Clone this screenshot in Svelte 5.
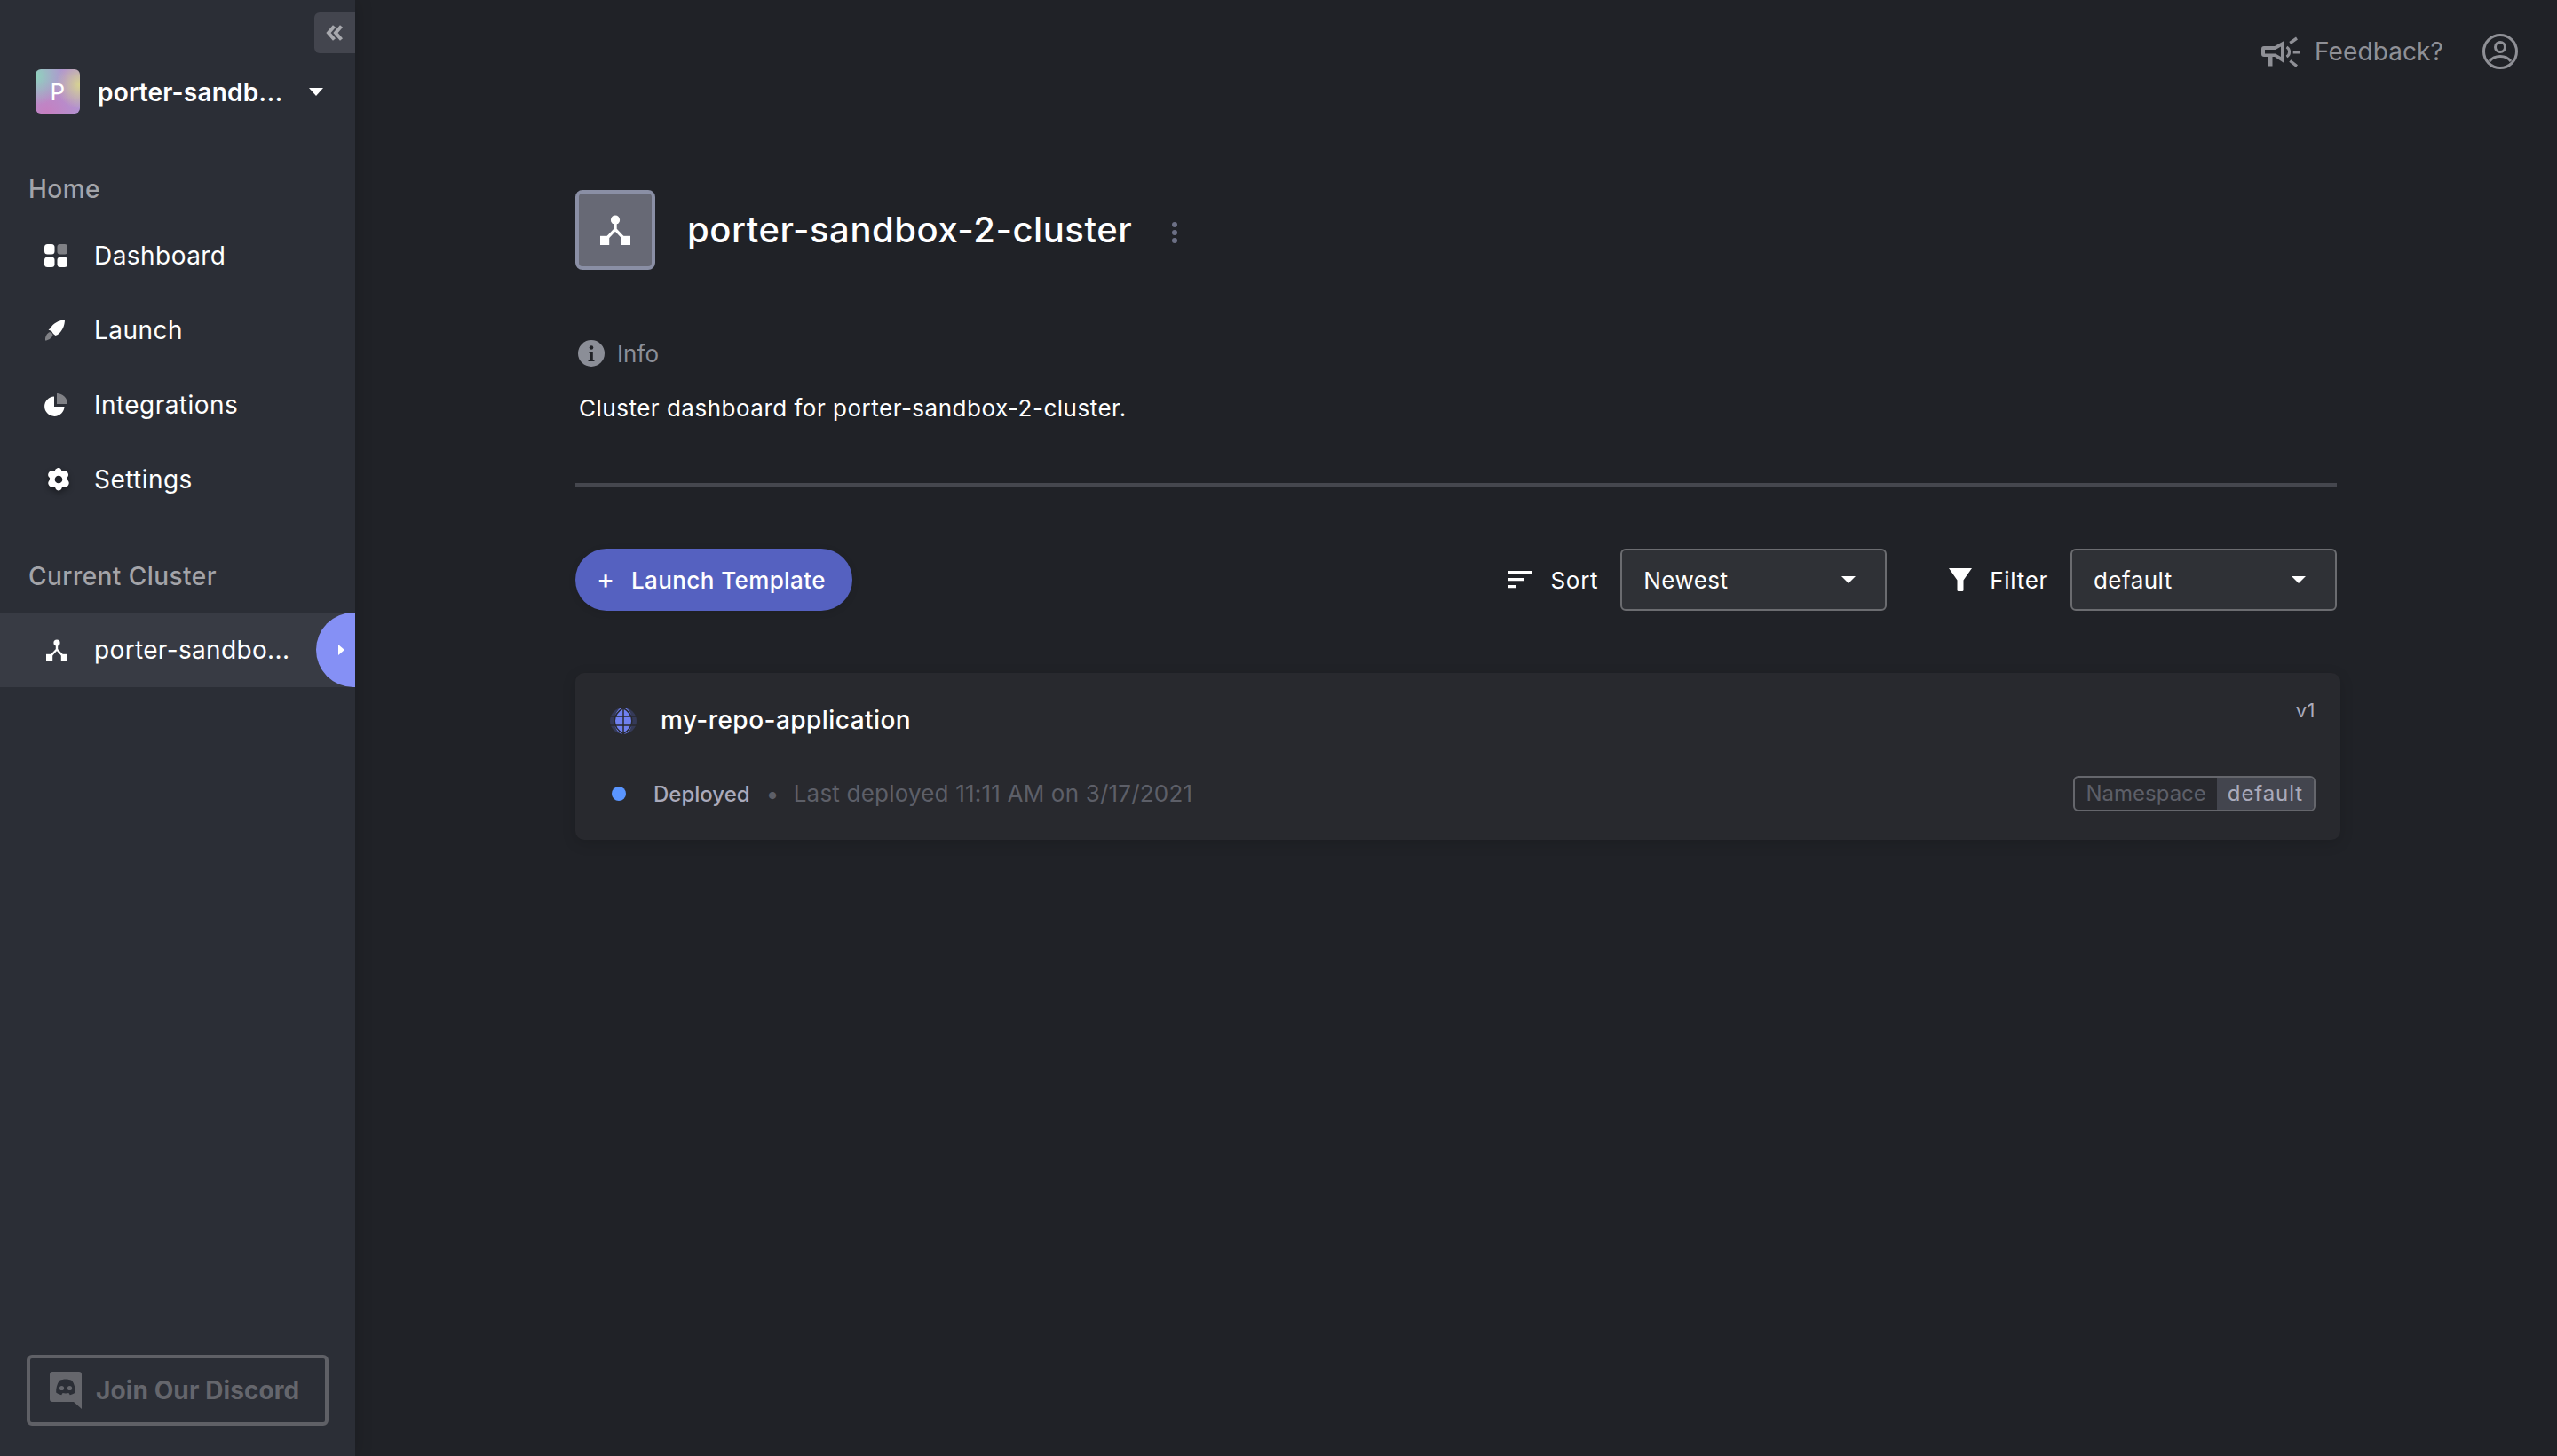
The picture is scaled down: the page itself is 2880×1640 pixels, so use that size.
<script>
	const navItems = [
		{ label: 'Dashboard', icon: 'dashboard' },
		{ label: 'Launch', icon: 'launch' },
		{ label: 'Integrations', icon: 'integrations' },
		{ label: 'Settings', icon: 'settings' }
	];
</script>

{#snippet clusterIcon()}
	<svg viewBox="0 0 24 24" class="cluster-svg">
		<circle cx="12" cy="4" r="3.6" fill="#fff" />
		<path d="M12 5v7.5M12 11.5L5 19M12 11.5L19 19" stroke="#fff" stroke-width="2.4" fill="none" />
		<rect x="0" y="16.8" width="7.2" height="7.2" fill="#fff" />
		<rect x="16.8" y="16.8" width="7.2" height="7.2" fill="#fff" />
	</svg>
{/snippet}

<div class="page">
	<aside class="sidebar">
		<button class="collapse" aria-label="Collapse sidebar">
			<svg viewBox="0 0 20 18" width="20" height="18">
				<path d="M9.500 1.500L3 9l6.500 7.500M17.500 1.500L11 9l6.500 7.500" stroke="#a8a9ae" stroke-width="4" fill="none" />
			</svg>
		</button>

		<div class="project">
			<div class="avatar">P</div>
			<span class="project-name">porter-sandb...</span>
			<span class="caret white"></span>
		</div>

		<div class="section-label home">Home</div>
		{#each navItems as item}
			<div class="nav-row">
				<span class="nav-icon">
					{#if item.icon === 'dashboard'}
						<svg viewBox="0 0 26 26" width="26" height="26">
							<rect x="0" y="0" width="11.5" height="11.5" rx="3.5" fill="#fff" />
							<rect x="14.5" y="0" width="11.5" height="11.5" rx="3" fill="#808186" />
							<rect x="0" y="14.5" width="11.5" height="11.5" rx="3.5" fill="#fff" />
							<rect x="14.5" y="14.5" width="11.5" height="11.5" rx="3.5" fill="#fff" />
						</svg>
					{:else if item.icon === 'launch'}
						<svg viewBox="0 0 24 24" width="24" height="24">
							<path d="M23 0C16 1 10 4 6.500 10L4.500 11.500 8 13l2 3 2.500 2L15 17C20 13 23 7 23 0z" fill="#fff" />
							<path d="M5 14.500c2-1 4.500 1 4.500 3.500C8 21 4 23.500 1 23.500 .5 20 2 16.500 5 14.500z" fill="#808186" />
						</svg>
					{:else if item.icon === 'integrations'}
						<svg viewBox="0 0 26 26" width="26" height="26">
							<path d="M11 3.500A11.200 11.200 0 1 0 22.500 15H11z" fill="#fff" />
							<path d="M14 0A12 12 0 0 1 26 12H14z" fill="#808186" />
						</svg>
					{:else}
						<svg viewBox="0 0 24 24" width="28" height="28" class="gear">
							<path fill="#fff" fill-rule="evenodd" d="M12 .8c1.100 0 2 .5 2.400 1.500l.5 1.300 1.400-.2c2.200-.3 3.800.7 4.600 2.100.8 1.400.8 2.800-.3 4.100l-.8 1 .8 1.800.7 .9c1 1.300 1 2.800.2 4.100-.8 1.400-2.300 2.400-4.500 2.100l-1.500-.2-.5 1.200c-.5 1.200-1.500 2.200-3 2.200s-2.500-1-3-2.200l-.5-1.200-1.500.2c-2.200.3-3.700-.7-4.500-2.100-.8-1.300-.8-2.800.2-4.100l.7-.9.100-1.800-.8-1c-1.100-1.300-1.100-2.700-.3-4.100.8-1.400 2.400-2.400 4.600-2.100l1.400.2.500-1.300C10 1.300 10.900.8 12 .8zM12 8.300a3.700 3.700 0 1 0 0 7.400 3.700 3.700 0 0 0 0-7.400z" />
						</svg>
					{/if}
				</span>
				<span class="nav-text">{item.label}</span>
			</div>
		{/each}

		<div class="section-label current">Current Cluster</div>
		<div class="nav-row selected">
			<span class="nav-icon">{@render clusterIcon()}</span>
			<span class="nav-text">porter-sandbo...</span>
			<span class="drawer-tab"><span class="tab-arrow"></span></span>
		</div>

		<div class="discord">
			<svg viewBox="0 0 36 42" width="36" height="42">
				<path fill="#65666c" d="M3 0h30a3 3 0 0 1 3 3v39l-9-8H3a3 3 0 0 1-3-3V3a3 3 0 0 1 3-3z" />
				<path fill="#2b2e36" d="M11 10c2.200-1 4.500-1.500 7-1.500s4.800.5 7 1.500c2.800 4 4 8.500 3.800 13.500-2 1.500-4 2.300-6 2.700l-1.400-2.200c-2.300.6-4.500.6-6.800 0l-1.400 2.200c-2-.4-4-1.200-6-2.700C7 18.500 8.200 14 11 10z" />
				<circle cx="13.500" cy="18.500" r="2.600" fill="#65666c" />
				<circle cx="22.500" cy="18.500" r="2.600" fill="#65666c" />
			</svg>
			<span>Join Our Discord</span>
		</div>
	</aside>

	<main class="main">
		<header class="topbar">
			<div class="feedback">
				<svg viewBox="0 0 44 34" width="44" height="34">
					<path fill="#8f9096" fill-rule="evenodd" d="M25.500 5v25L15 23H3a3 3 0 0 1-3-3v-6a3 3 0 0 1 3-3h12zM22 11.500L16 15H4v4.500h12l6 3.500z" />
					<path d="M7.500 23h5v10.500h-5z" fill="#8f9096" />
					<path d="M28.500 12a6.500 6.500 0 0 1 0 11" stroke="#8f9096" stroke-width="3" fill="none" />
					<path d="M32.300 7.500l7.700-5.500M35.700 17.700H44M32.300 27.500l7.700 6" stroke="#8f9096" stroke-width="3.400" fill="none" />
				</svg>
				<span>Feedback?</span>
			</div>
			<svg class="user" viewBox="0 0 40 40" width="40" height="40">
				<circle cx="20" cy="20" r="18.500" stroke="#8f9096" stroke-width="3" fill="none" />
				<circle cx="20" cy="15" r="5.500" stroke="#8f9096" stroke-width="3" fill="none" />
				<path d="M8 31c3-4 7.500-5.500 12-5.500S29 27 32 31" stroke="#8f9096" stroke-width="3" fill="none" />
			</svg>
		</header>

		<section class="content">
			<div class="title-row">
				<div class="title-tile">{@render clusterIcon()}</div>
				<h1>porter-sandbox-2-cluster</h1>
				<div class="kebab"><i></i><i></i><i></i></div>
			</div>

			<div class="info-row">
				<svg viewBox="0 0 30 30" width="30" height="30">
					<circle cx="15" cy="15" r="15" fill="#8b8e97" />
					<circle cx="15" cy="8.500" r="2.300" fill="#202227" />
					<path d="M12.500 13h4.300v9H18.500v2h-7v-2h2v-7h-1z" fill="#202227" />
				</svg>
				<span>Info</span>
			</div>
			<p class="description">Cluster dashboard for porter-sandbox-2-cluster.</p>
			<div class="divider"></div>

			<div class="controls">
				<button class="launch-btn"><span class="plus">+</span>Launch Template</button>
				<div class="selectors">
					<svg class="sort-icon" viewBox="0 0 28 20" width="28" height="20">
						<path d="M0 0h28v3.200H0zM0 8h19v3.200H0zM0 16h9v3.200H0z" fill="#fff" />
					</svg>
					<span class="sel-label">Sort</span>
					<div class="select"><span>Newest</span><span class="caret small"></span></div>
					<svg class="filter-icon" viewBox="0 0 26 26" width="26" height="26">
						<path d="M0 0h26L16.500 13.500V25a1.500 1.500 0 0 1-1.500 1h-4a1.500 1.500 0 0 1-1.500-1V13.500z" fill="#fff" />
					</svg>
					<span class="sel-label">Filter</span>
					<div class="select"><span>default</span><span class="caret small"></span></div>
				</div>
			</div>

			<article class="card">
				<div class="card-top">
					<div class="card-name">
						<svg viewBox="0 0 30 30" width="30" height="30">
							<circle cx="15" cy="15" r="15" fill="#353a58" />
							<ellipse cx="15" cy="15" rx="10" ry="15" fill="#6f80f0" />
							<path d="M0 10h30M0 20h30M15 0v30" stroke="#28292e" stroke-width="1.500" />
							<path d="M15 .5C2 8 2 22 15 29.500M15 .5C28 8 28 22 15 29.500" stroke="#28292e" stroke-width="1.500" fill="none" />
						</svg>
						<span>my-repo-application</span>
					</div>
					<span class="version">v1</span>
				</div>
				<div class="card-bottom">
					<div class="status">
						<span class="dot"></span>
						<span class="deployed">Deployed</span>
						<span class="sep">•</span>
						<span class="last">Last deployed 11:11 AM on 3/17/2021</span>
					</div>
					<div class="tag"><span class="tag-key">Namespace</span><span class="tag-val">default</span></div>
				</div>
			</article>
		</section>
	</main>
</div>

<style>
	:global(body) {
		margin: 0;
		background: #202227;
	}

	.page {
		display: flex;
		width: 2880px;
		height: 1640px;
		overflow: hidden;
		font-family: Inter, "Liberation Sans", sans-serif;
		letter-spacing: 0.45px;
		color: #fff;
		background: #202227;
	}

	.sidebar {
		position: relative;
		display: flex;
		flex-direction: column;
		flex: 0 0 400px;
		height: 1640px;
		background: #2b2e36;
		box-shadow: 4px 0 16px rgba(0, 0, 0, 0.12);
	}

	.collapse {
		position: absolute;
		top: 14px;
		right: 0;
		display: flex;
		align-items: center;
		justify-content: center;
		width: 46px;
		height: 46px;
		padding: 0;
		border: 0;
		border-radius: 6px 0 0 6px;
		background: #43454e;
	}

	.project {
		display: flex;
		align-items: center;
		height: 50px;
		margin-top: 78px;
		padding: 0 36px 0 40px;
	}

	.avatar {
		display: flex;
		align-items: center;
		justify-content: center;
		width: 50px;
		height: 50px;
		border-radius: 6px;
		font-size: 26px;
		background:
			radial-gradient(circle at 100% 35%, #d8d490 0, transparent 45%),
			radial-gradient(circle at 0 15%, #8fd3bd 0, transparent 50%),
			radial-gradient(circle at 25% 100%, #c67fc0 0, transparent 60%),
			#b192d0;
	}

	.project-name {
		margin-left: 20px;
		padding-top: 2px;
		font-size: 28px;
		font-weight: 600;
		letter-spacing: 0.2px;
		white-space: nowrap;
	}

	.caret {
		width: 0;
		height: 0;
		margin-left: auto;
		border-left: 8px solid transparent;
		border-right: 8px solid transparent;
		border-top: 9px solid #fff;
	}

	.section-label {
		padding-left: 32px;
		font-size: 28px;
		font-weight: 500;
		line-height: 44px;
		color: #a3a4a9;
	}

	.home {
		margin-top: 62px;
		margin-bottom: 12px;
		padding-top: 1px;
		height: 43px;
	}

	.current {
		margin-top: 44px;
		margin-bottom: 20px;
		padding-top: 1px;
		height: 43px;
	}

	.nav-row {
		position: relative;
		display: flex;
		align-items: center;
		height: 84px;
		padding-left: 50px;
		font-size: 28px;
	}

	.nav-row.selected {
		background: #383b44;
	}

	.nav-icon {
		display: flex;
		align-items: center;
		justify-content: flex-start;
		width: 56px;
	}

	.gear {
		margin-left: 2px;
		filter: drop-shadow(0 3px 3px rgba(0, 0, 0, 0.4));
	}

	.cluster-svg {
		display: block;
		width: 24px;
		height: 24px;
	}

	.selected .nav-icon {
		padding-left: 2px;
		width: 54px;
	}

	.selected .nav-text {
		letter-spacing: 0.35px;
	}

	.drawer-tab {
		position: absolute;
		top: 0;
		right: 0;
		display: flex;
		align-items: center;
		justify-content: flex-end;
		width: 44px;
		height: 84px;
		padding-right: 12px;
		box-sizing: border-box;
		border-radius: 42px 0 0 42px;
		background: #8590f5;
	}

	.tab-arrow {
		width: 0;
		height: 0;
		border-top: 6px solid transparent;
		border-bottom: 6px solid transparent;
		border-left: 7px solid #fff;
	}

	.discord {
		display: flex;
		align-items: center;
		gap: 16px;
		box-sizing: border-box;
		width: 340px;
		height: 80px;
		margin: auto 0 34px 30px;
		padding-left: 22px;
		border: 4px solid #5f6066;
		border-radius: 6px;
		font-size: 28px;
		font-weight: 700;
		letter-spacing: 0.1px;
		color: #65666c;
		white-space: nowrap;
	}

	.main {
		flex: 1;
		min-width: 0;
	}

	.topbar {
		display: flex;
		align-items: center;
		justify-content: flex-end;
		gap: 44px;
		height: 116px;
		padding-right: 44px;
		color: #8f9096;
	}

	.feedback {
		display: flex;
		align-items: center;
		gap: 16px;
		font-size: 28px;
		letter-spacing: 0.1px;
	}

	.content {
		width: 1984px;
		margin-left: 248px;
	}

	.title-row {
		display: flex;
		align-items: center;
		height: 90px;
		margin-top: 98px;
	}

	.title-tile {
		display: flex;
		align-items: center;
		justify-content: center;
		box-sizing: border-box;
		width: 90px;
		height: 90px;
		border: 4px solid #8a8fa5;
		border-radius: 8px;
		background: #676975;
	}

	.title-tile .cluster-svg {
		width: 34px;
		height: 34px;
	}

	h1 {
		margin: 0 0 2px 36px;
		font-size: 40px;
		font-weight: 500;
		letter-spacing: 0.55px;
	}

	.kebab {
		display: flex;
		flex-direction: column;
		gap: 3px;
		margin: 6px 0 0 45px;
	}

	.kebab i {
		width: 6px;
		height: 6px;
		border-radius: 50%;
		background: #6c7085;
	}

	.info-row {
		display: flex;
		align-items: center;
		gap: 14px;
		height: 30px;
		margin-top: 79px;
		padding-left: 3px;
		font-size: 26px;
		letter-spacing: 0.1px;
		color: #8b8e97;
	}

	.description {
		margin: 27px 0 0;
		padding-left: 4px;
		font-size: 26px;
		line-height: 40px;
		letter-spacing: 0.5px;
	}

	.divider {
		height: 4px;
		margin-top: 64px;
		background: #45474e;
	}

	.controls {
		display: flex;
		align-items: center;
		justify-content: space-between;
		height: 70px;
		margin-top: 70px;
	}

	.launch-btn {
		display: flex;
		align-items: center;
		width: 312px;
		height: 70px;
		padding: 0 0 0 24px;
		border: 0;
		border-radius: 35px;
		background: #5561c0;
		color: #fff;
		font: 500 26px Inter, "Liberation Sans", sans-serif;
		letter-spacing: 0.4px;
		box-shadow: 0 2px 8px rgba(0, 0, 0, 0.1);
		white-space: nowrap;
	}

	.plus {
		width: 39px;
		margin-top: -2px;
		text-align: left;
		font-size: 30px;
		line-height: 30px;
	}

	.selectors {
		display: flex;
		align-items: center;
		font-size: 26px;
	}

	.sort-icon {
		margin-right: 20px;
	}

	.filter-icon {
		margin-left: 70px;
		margin-right: 20px;
	}

	.sel-label {
		margin-right: 25px;
		letter-spacing: 0.7px;
	}

	.select {
		display: flex;
		align-items: center;
		justify-content: space-between;
		box-sizing: border-box;
		width: 300px;
		height: 70px;
		padding: 0 33px 0 24px;
		border: 2px solid #6b6c70;
		border-radius: 6px;
		background: #2f3136;
	}

	.caret.small {
		border-left-width: 8px;
		border-right-width: 8px;
		border-top-width: 8px;
	}

	.card {
		box-sizing: border-box;
		width: 1988px;
		height: 188px;
		margin-top: 70px;
		padding: 34px 28px 0 39px;
		border-radius: 10px;
		background: #28292e;
		box-shadow: 0 4px 16px rgba(0, 0, 0, 0.14);
	}

	.card-top,
	.card-bottom {
		display: flex;
		align-items: center;
		justify-content: space-between;
		height: 40px;
	}

	.card-bottom {
		margin-top: 42px;
	}

	.card-name {
		display: flex;
		align-items: center;
		gap: 27px;
		font-size: 28px;
		font-weight: 500;
	}

	.card-name span {
		margin-top: -2px;
	}

	.version {
		align-self: flex-start;
		margin-top: -4px;
		font-size: 22px;
		line-height: 24px;
		color: #aaaabb;
	}

	.status {
		display: flex;
		align-items: center;
		font-size: 26px;
	}

	.dot {
		width: 16px;
		height: 16px;
		margin-left: 2px;
		border-radius: 50%;
		background: #5a95ff;
	}

	.deployed {
		margin-left: 31px;
		font-size: 24px;
		letter-spacing: 0;
		font-weight: 500;
		color: #aaaabb;
	}

	.sep {
		margin: 0 16px 0 18px;
		color: #5d5f68;
	}

	.last {
		letter-spacing: 0.2px;
		margin-top: -2px;
		color: #5d5f68;
	}

	.tag {
		display: flex;
		box-sizing: border-box;
		height: 40px;
		border: 2px solid #65666c;
		border-radius: 6px;
		overflow: hidden;
		font-size: 24px;
		line-height: 36px;
	}

	.tag-key {
		padding: 0 12px;
		letter-spacing: 0;
		color: #5d5f68;
	}

	.tag-val {
		padding: 0 12px;
		letter-spacing: 0.9px;
		background: #43454e;
		color: #aaaabb;
	}

	svg {
		flex-shrink: 0;
		display: block;
	}
</style>
